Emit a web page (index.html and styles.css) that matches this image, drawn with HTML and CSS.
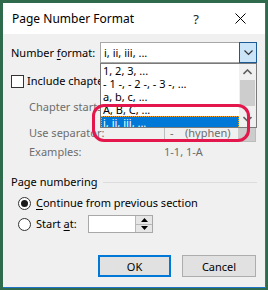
FILE: index.html
```html
<!DOCTYPE html>
<html lang="en">
<head>
    <meta charset="UTF-8">
    <title>Page Number Format</title>
    <link rel="stylesheet" href="styles.css">
</head>
<body>
    <div class="dialog">
        <div class="titlebar">
            <span class="title">Page Number Format</span>
            <span class="tb-btn help">?</span>
            <span class="tb-btn close">
                <svg width="11" height="11" viewBox="0 0 11 11"><path d="M0.5 0.5L10.5 10.5M10.5 0.5L0.5 10.5" stroke="#000" stroke-width="1" fill="none"/></svg>
            </span>
        </div>

        <div class="content">
            <div class="row row-format">
                <label class="lbl-format">Number <u>f</u>ormat:</label>
                <div class="combo">
                    <span class="combo-value">i, ii, iii, ...</span>
                    <span class="combo-btn">
                        <svg width="9" height="6" viewBox="0 0 9 6"><path d="M0.5 0.5L4.5 4.5L8.5 0.5" stroke="#333" stroke-width="1.2" fill="none"/></svg>
                    </span>
                    <div class="listbox">
                        <div class="items">
                            <div class="item">1, 2, 3, ...</div>
                            <div class="item">- 1 -, - 2 -, - 3 -, ...</div>
                            <div class="item">a, b, c, ...</div>
                            <div class="item">A, B, C, ...</div>
                            <div class="item selected">i, ii, iii, ...</div>
                        </div>
                        <div class="scrollbar">
                            <span class="sb-arrow">
                                <svg width="9" height="6" viewBox="0 0 9 6"><path d="M0.5 5L4.5 1L8.5 5" stroke="#606060" stroke-width="1.6" fill="none"/></svg>
                            </span>
                            <span class="sb-thumb"></span>
                            <span class="sb-track"></span>
                            <span class="sb-arrow">
                                <svg width="9" height="6" viewBox="0 0 9 6"><path d="M0.5 1L4.5 5L8.5 1" stroke="#606060" stroke-width="1.6" fill="none"/></svg>
                            </span>
                        </div>
                    </div>
                </div>
            </div>

            <div class="row row-check">
                <span class="checkbox"></span>
                <span>Include chapter number</span>
            </div>

            <div class="row row-sub row-chapter disabled">
                <span>Chapter starts with style</span>
            </div>

            <div class="row row-sub row-sep disabled">
                <span>Use separator:</span>
                <div class="select-disabled">
                    <span class="sel-text">-&nbsp;&nbsp;&nbsp;&nbsp;(hyphen)</span>
                    <span class="sel-btn"></span>
                </div>
            </div>

            <div class="row row-sub row-examples disabled">
                <span>Examples:</span>
                <span>1-1, 1-A</span>
            </div>

            <div class="row group-head">
                <span>Page numbering</span>
                <span class="group-line"></span>
            </div>

            <div class="row row-radio row-continue">
                <span class="radio checked"></span>
                <span><u>C</u>ontinue from previous section</span>
            </div>

            <div class="row row-radio row-start">
                <span class="radio"></span>
                <span class="start-label">Start <u>a</u>t:</span>
                <div class="spin-input">
                    <span class="spin-field"></span>
                    <span class="spin">
                        <span class="spin-half"><svg width="7" height="4" viewBox="0 0 7 4"><path d="M0 4L3.5 0L7 4Z" fill="#000"/></svg></span>
                        <span class="spin-half"><svg width="7" height="4" viewBox="0 0 7 4"><path d="M0 0L3.5 4L7 0Z" fill="#000"/></svg></span>
                    </span>
                </div>
            </div>

            <div class="row buttons">
                <button class="btn default">OK</button>
                <button class="btn">Cancel</button>
            </div>
        </div>

        <div class="highlight"></div>
    </div>
</body>
</html>
```

FILE: styles.css
```css
html, body {
    margin: 0;
    padding: 0;
}
body {
    width: 268px;
    height: 290px;
    background-color: #2f6a4c;
    padding: 3px 2px 2px 3px;
    box-sizing: border-box;
    font-family: "Noto Sans", "Open Sans", sans-serif;
    font-size: 11px;
    color: #000;
}
.dialog {
    position: relative;
    width: 263px;
    height: 285px;
    box-sizing: border-box;
    border-right: 1px solid #1f74c8;
    border-bottom: 1px solid #1f74c8;
    background-color: #f0f0f0;
    display: flex;
    flex-direction: column;
}
.titlebar {
    height: 31px;
    background-color: #fff;
    display: flex;
    align-items: center;
    padding-left: 9px;
    padding-right: 3px;
    font-size: 12px;
}
.title {
    flex: 1;
    line-height: 16px;
}
.tb-btn {
    width: 44px;
    display: flex;
    justify-content: center;
    align-items: center;
}
.help {
    font-size: 13px;
    color: #222;
}
.content {
    padding: 0 8px;
}
.row {
    display: flex;
    align-items: center;
    line-height: 16px;
    white-space: nowrap;
}
u {
    text-decoration-thickness: 1px;
    text-underline-offset: 2px;
}
.disabled {
    color: #6d6d6d;
}

/* number format combo */
.row-format {
    margin-top: 8px;
    height: 21px;
}
.lbl-format {
    width: 89px;
    flex-shrink: 0;
}
.combo {
    position: relative;
    width: 157px;
    height: 21px;
    box-sizing: border-box;
    border: 1px solid #a8a8a8;
    background-color: #fff;
    display: flex;
    align-items: center;
}
.combo-value {
    padding-left: 3px;
}
.combo-btn {
    position: absolute;
    top: -1px;
    right: -1px;
    width: 18px;
    height: 21px;
    box-sizing: border-box;
    border: 1px solid #1c5a96;
    background-color: #cce4f7;
    display: flex;
    justify-content: center;
    align-items: center;
}
.listbox {
    position: absolute;
    left: -1px;
    top: 20px;
    width: 157px;
    height: 65px;
    box-sizing: border-box;
    border: 1px solid #7a7a7a;
    background-color: #fff;
    display: flex;
    overflow: hidden;
    z-index: 2;
}
.items {
    flex: 1;
}
.item {
    height: 13px;
    line-height: 13px;
    padding-left: 2px;
    box-sizing: border-box;
}
.item.selected {
    background-color: #0078d7;
    color: #fff;
    outline: 1px dotted #f5a623;
    outline-offset: -1px;
}
.scrollbar {
    width: 17px;
    background-color: #f0f0f0;
    display: flex;
    flex-direction: column;
}
.sb-arrow {
    height: 16px;
    display: flex;
    justify-content: center;
    align-items: center;
}
.sb-thumb {
    height: 26px;
    margin: 0 1px;
    background-color: #cdcdcd;
}
.sb-track {
    flex: 1;
}

/* include chapter number */
.row-check {
    margin-top: 11px;
    height: 14px;
}
.checkbox {
    width: 13px;
    height: 13px;
    box-sizing: border-box;
    border: 1px solid #333;
    background-color: #fff;
    margin-right: 3px;
}
.row-sub {
    padding-left: 18px;
}
.row-chapter {
    margin-top: 11px;
    height: 16px;
}
.row-sep {
    margin-top: 9px;
    height: 18px;
}
.row-sep > span:first-child,
.row-examples > span:first-child {
    width: 135px;
}
.select-disabled {
    width: 92px;
    height: 18px;
    box-sizing: border-box;
    border: 1px solid #bcbcbc;
    background-color: #f0f0f0;
    display: flex;
}
.sel-text {
    flex: 1;
    padding-left: 5px;
    line-height: 16px;
}
.sel-btn {
    width: 17px;
    background-color: #cccccc;
}
.row-examples {
    margin-top: 2px;
    height: 16px;
}

/* page numbering group */
.group-head {
    margin-top: 14px;
    height: 16px;
}
.group-line {
    flex: 1;
    height: 1px;
    margin-left: 6px;
    background-color: #dcdcdc;
}
.row-radio {
    padding-left: 7px;
}
.radio {
    width: 13px;
    height: 13px;
    box-sizing: border-box;
    border: 1px solid #333;
    border-radius: 50%;
    background-color: #fff;
    margin-right: 5px;
    display: flex;
    justify-content: center;
    align-items: center;
}
.radio.checked::after {
    content: "";
    width: 7px;
    height: 7px;
    border-radius: 50%;
    background-color: #1a1a1a;
}
.row-continue {
    margin-top: 5px;
    height: 16px;
}
.row-start {
    margin-top: 4px;
    height: 18px;
}
.start-label {
    width: 52px;
}
.spin-input {
    width: 65px;
    height: 18px;
    box-sizing: border-box;
    border: 1px solid #a8a8a8;
    background-color: #fff;
    display: flex;
}
.spin-field {
    flex: 1;
}
.spin {
    width: 16px;
    display: flex;
    flex-direction: column;
    border-left: 1px solid #b8b8b8;
    background-color: #e6e6e6;
}
.spin-half {
    flex: 1;
    display: flex;
    justify-content: center;
    align-items: center;
}
.spin-half:first-child {
    border-bottom: 1px solid #b8b8b8;
}

/* buttons */
.buttons {
    margin-top: 22px;
    justify-content: flex-end;
    gap: 11px;
    padding-right: 1px;
}
.btn {
    height: 22px;
    box-sizing: border-box;
    border: 1px solid #adadad;
    background-color: #e1e1e1;
    font-family: inherit;
    font-size: 11px;
    color: #000;
    padding: 0;
    width: 74px;
}
.btn.default {
    width: 73px;
    border: 2px solid #0078d7;
}

.highlight {
    position: absolute;
    left: 89px;
    top: 101px;
    width: 158px;
    height: 38px;
    box-sizing: border-box;
    border: 3px solid #e3174c;
    border-radius: 12px;
    z-index: 3;
}
```
